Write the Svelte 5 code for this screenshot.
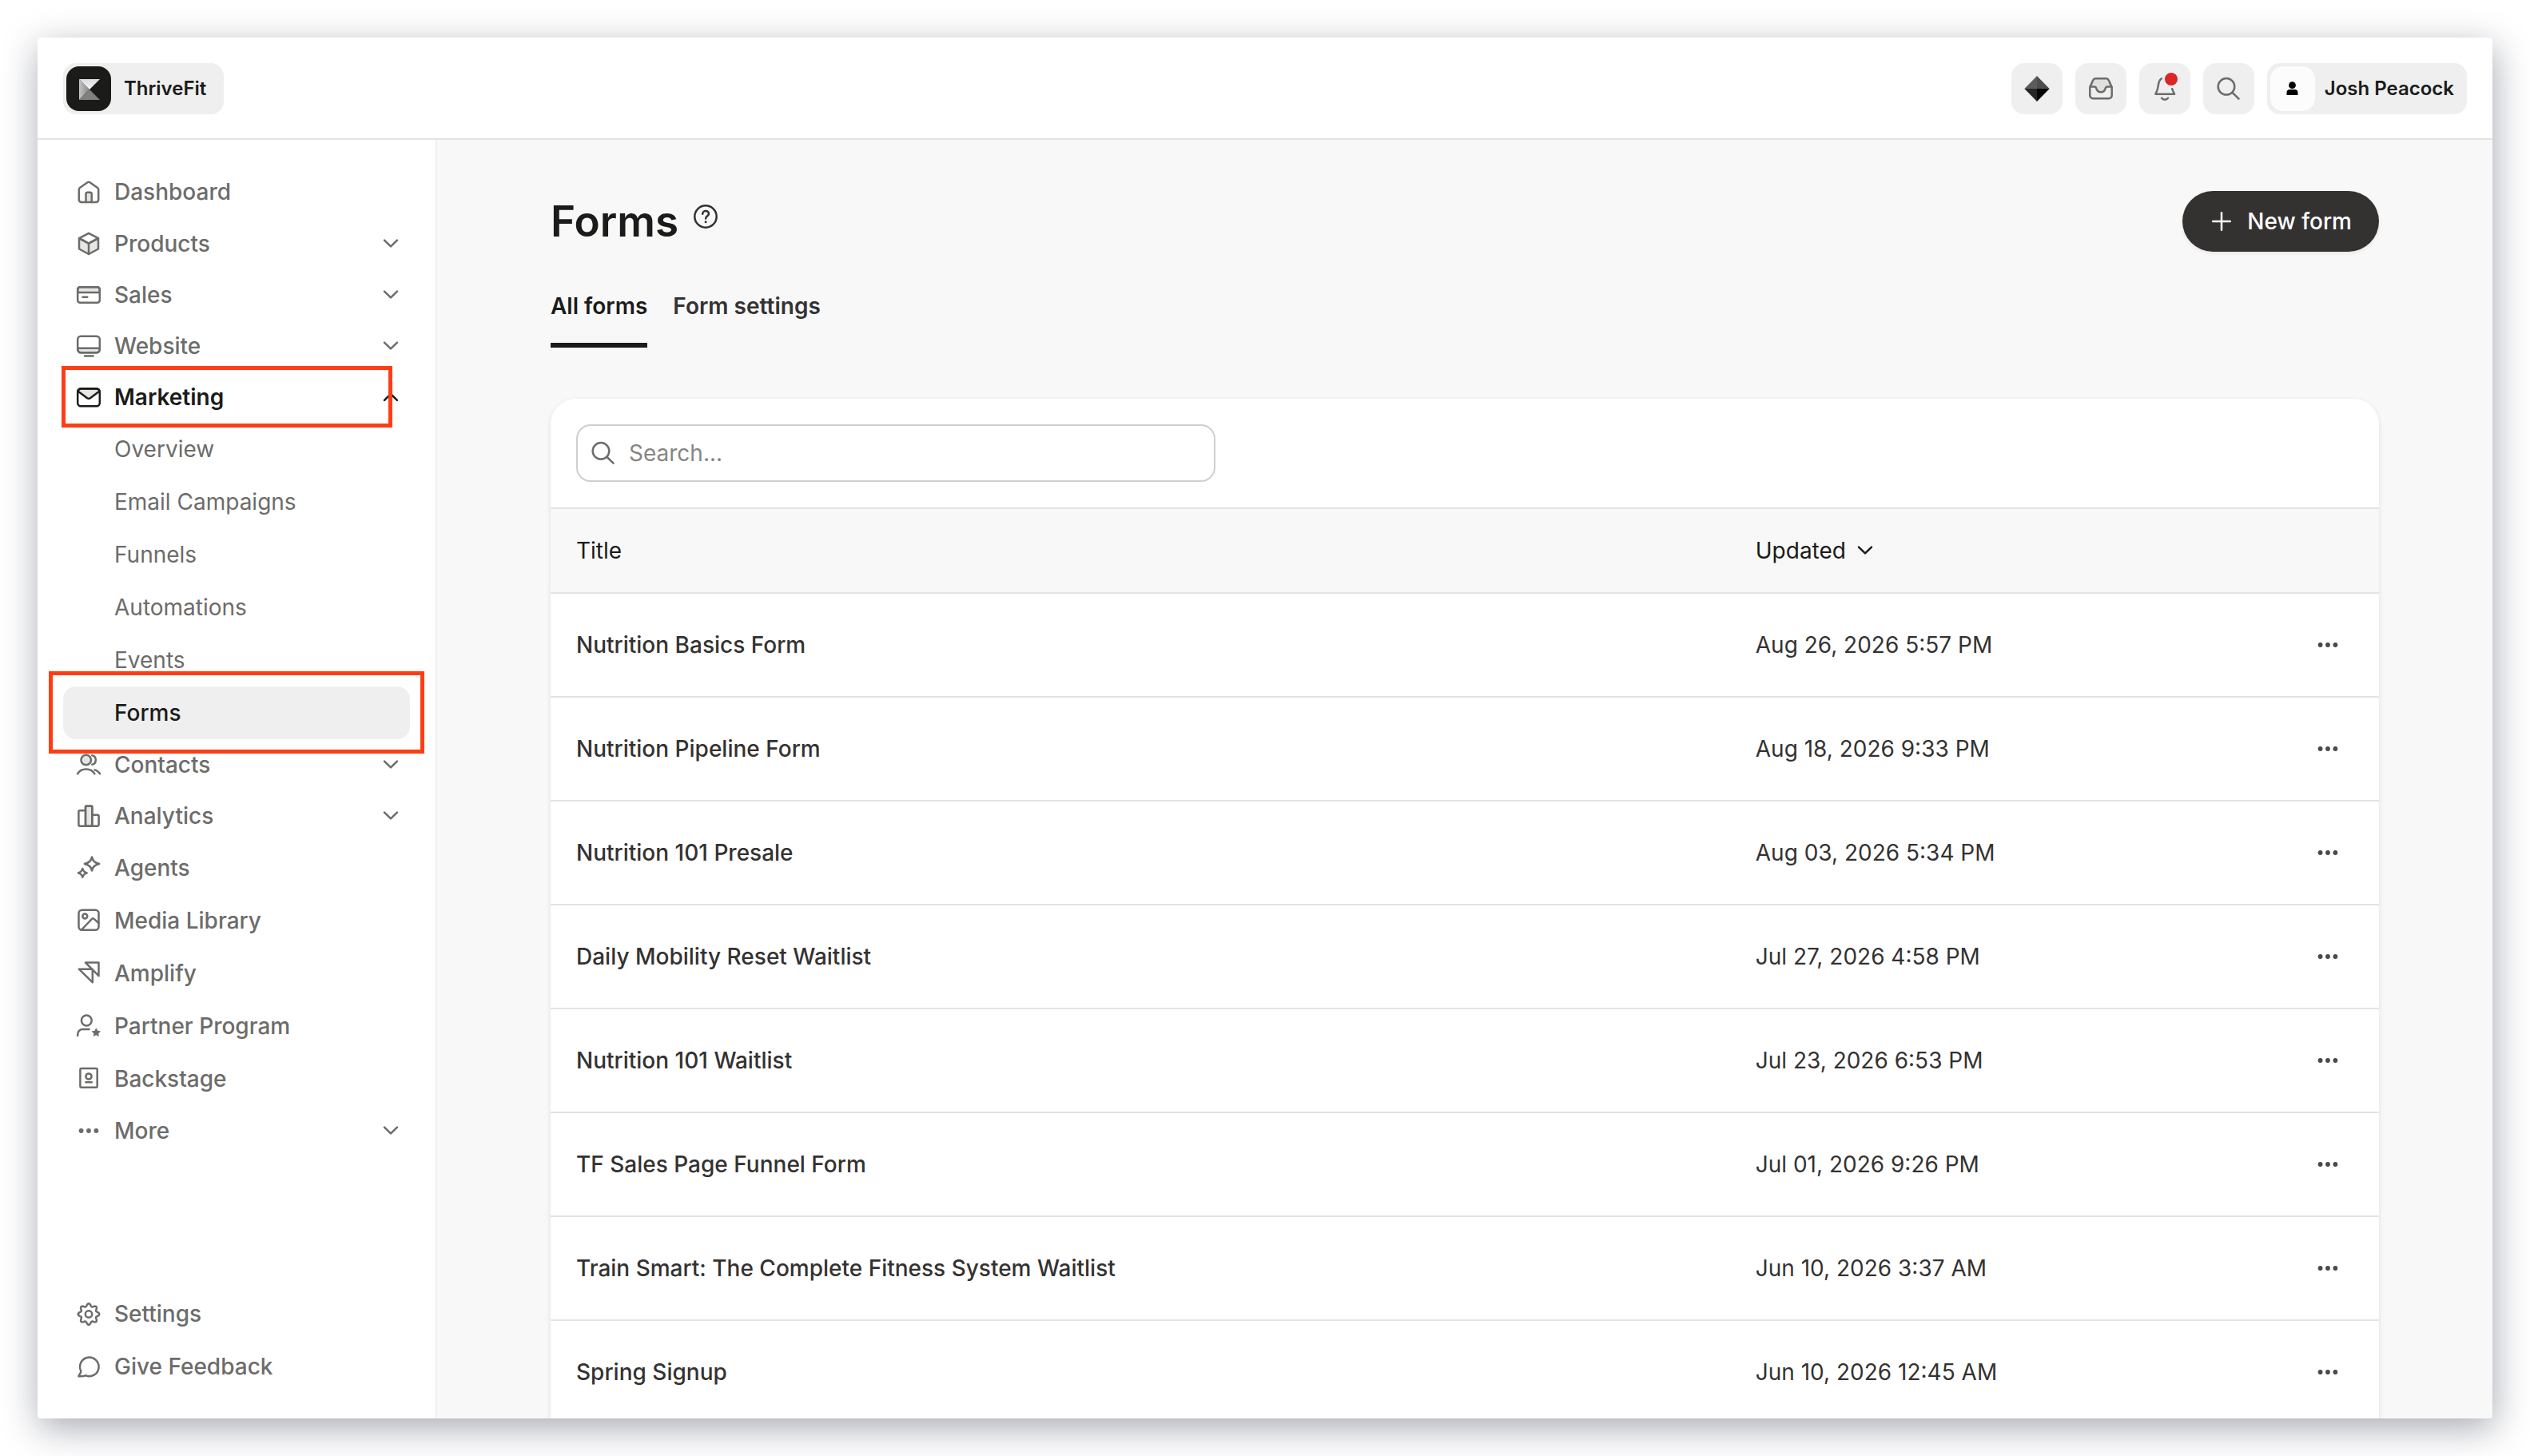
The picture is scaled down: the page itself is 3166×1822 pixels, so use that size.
<script lang="ts">
	type NavItem = {
		label: string;
		icon: string;
		expandable?: boolean;
		children?: string[];
	};

	type FormRow = {
		id: number;
		title: string;
		updated: string;
	};

	const nav: NavItem[] = [
		{ label: 'Dashboard', icon: 'home' },
		{ label: 'Products', icon: 'box', expandable: true },
		{ label: 'Sales', icon: 'card', expandable: true },
		{ label: 'Website', icon: 'monitor', expandable: true },
		{
			label: 'Marketing',
			icon: 'mail',
			expandable: true,
			children: ['Overview', 'Email Campaigns', 'Funnels', 'Automations', 'Events', 'Forms']
		},
		{ label: 'Contacts', icon: 'users', expandable: true },
		{ label: 'Analytics', icon: 'bars', expandable: true },
		{ label: 'Agents', icon: 'sparkle' },
		{ label: 'Media Library', icon: 'image' },
		{ label: 'Amplify', icon: 'amplify' },
		{ label: 'Partner Program', icon: 'partner' },
		{ label: 'Backstage', icon: 'badge' },
		{ label: 'More', icon: 'dots', expandable: true }
	];

	const footerNav: NavItem[] = [
		{ label: 'Settings', icon: 'gear' },
		{ label: 'Give Feedback', icon: 'chat' }
	];

	const forms: FormRow[] = [
		{ id: 1, title: 'Nutrition Basics Form', updated: 'Aug 26, 2026 5:57 PM' },
		{ id: 2, title: 'Nutrition Pipeline Form', updated: 'Aug 18, 2026 9:33 PM' },
		{ id: 3, title: 'Nutrition 101 Presale', updated: 'Aug 03, 2026 5:34 PM' },
		{ id: 4, title: 'Daily Mobility Reset Waitlist', updated: 'Jul 27, 2026 4:58 PM' },
		{ id: 5, title: 'Nutrition 101 Waitlist', updated: 'Jul 23, 2026 6:53 PM' },
		{ id: 6, title: 'TF Sales Page Funnel Form', updated: 'Jul 01, 2026 9:26 PM' },
		{ id: 7, title: 'Train Smart: The Complete Fitness System Waitlist', updated: 'Jun 10, 2026 3:37 AM' },
		{ id: 8, title: 'Spring Signup', updated: 'Jun 10, 2026 12:45 AM' }
	];

	let openSection = $state('Marketing');
	let currentPage = $state('Forms');
	let activeTab = $state('All forms');
	let search = $state('');

	const visibleForms = $derived(
		forms.filter((f) => f.title.toLowerCase().includes(search.toLowerCase()))
	);

	function toggle(label: string) {
		openSection = openSection === label ? '' : label;
	}

	// Eight-lobed gear outline
	const gearPath =
		Array.from({ length: 96 }, (_, i) => {
			const a = (i / 96) * Math.PI * 2;
			const r = 11.6 + 1.7 * Math.cos(8 * a);
			const x = 16 + r * Math.cos(a);
			const y = 16.5 + r * Math.sin(a);
			return `${i ? 'L' : 'M'}${x.toFixed(2)} ${y.toFixed(2)}`;
		}).join('') + 'Z';
</script>

<svelte:head>
	<title>Forms</title>
</svelte:head>

{#snippet icon(name: string)}
	<svg class="icon" viewBox="0 0 32 32" aria-hidden="true">
		{#if name === 'home'}
			<path d="M12.5 29V18.5a1.8 1.8 0 0 1 1.8-1.8h3.6a1.8 1.8 0 0 1 1.8 1.8V29" class="tint" />
			<path d="M3.8 13.2c0-.9.4-1.7 1.1-2.2l9.6-6.8c.9-.6 2.1-.6 3 0l9.6 6.8c.7.5 1.1 1.3 1.1 2.2V26a3 3 0 0 1-3 3H6.8a3 3 0 0 1-3-3Z" />
		{:else if name === 'box'}
			<path d="M4 9.2 16 15.6 28 9.2V22.5L16 29 4 22.5Z" class="tint" />
			<path d="M16 15.6V29M16 2.8 28 9.2 16 15.6 4 9.2Z" />
		{:else if name === 'card'}
			<path d="M2.2 13V9.3a3 3 0 0 1 3-3h21.6a3 3 0 0 1 3 3V13Z" class="tint" />
			<rect x="2.2" y="6.3" width="27.6" height="19.5" rx="3" />
			<path d="M8.5 18.7h5.8" />
		{:else if name === 'monitor'}
			<path d="M2.2 18.7h27.6v1.6a4 4 0 0 1-4 4H6.2a4 4 0 0 1-4-4Z" class="tint" />
			<rect x="2.2" y="3.7" width="27.6" height="20.6" rx="4" />
			<path d="M11 28.4h10.5" />
		{:else if name === 'mail'}
			<path d="M2.5 8.5c.5-2 2-3 4-3h19c2 0 3.5 1 4 3L17.8 17.2c-1.2.8-2.4.8-3.6 0Z" class="tint" />
			<rect x="2.2" y="5.3" width="27.6" height="22" rx="4" />
		{:else if name === 'users'}
			<circle cx="12.7" cy="10" r="6.3" class="tint" />
			<path d="M2 27.3c2.3-3.6 6.2-5.7 10.7-5.7s8.4 2.1 10.7 5.7M20.3 4.2c2.7.6 4.5 3 4.5 5.8s-1.8 5.2-4.5 5.8M23.5 22.4c2.7.7 5 2.5 6.6 4.9" />
		{:else if name === 'bars'}
			<rect x="12" y="3.7" width="8.3" height="25" class="tint" />
			<path d="M12 28.7H5a1.6 1.6 0 0 1-1.6-1.6V10.8A1.6 1.6 0 0 1 5 9.2h7M12 28.7V5.3a1.6 1.6 0 0 1 1.6-1.6h5.1a1.6 1.6 0 0 1 1.6 1.6v23.4M20.3 14.8H27a1.6 1.6 0 0 1 1.6 1.6v10.7a1.6 1.6 0 0 1-1.6 1.6H12" />
		{:else if name === 'sparkle'}
			<path d="M20 2.5c1.2 4.8 3.2 7 9.2 8.5-6 1.5-8 3.7-9.2 8.5-1.2-4.8-3.2-7-9.2-8.5 6-1.5 8-3.7 9.2-8.5Z" />
			<path d="M8.3 17c.8 3 2.1 4.5 5.4 5.4-3.3.9-4.6 2.4-5.4 5.4-.8-3-2.1-4.5-5.4-5.4 3.3-.9 4.6-2.4 5.4-5.4Z" />
		{:else if name === 'image'}
			<rect x="3.5" y="2.8" width="25" height="25" rx="4" />
			<circle cx="11.3" cy="10.5" r="3" />
			<path d="m7.5 27 12.6-13.2a1.8 1.8 0 0 1 2.5 0l5.7 5.2" />
		{:else if name === 'amplify'}
			<path d="M3.8 10.7h17v16.6ZM12 2.6h16.5v16.6Z" />
		{:else if name === 'partner'}
			<circle cx="13.3" cy="9" r="6.4" />
			<path d="M2.2 28v-1.5c0-3.6 2.7-6.4 6.3-6.4h8" />
			<path class="solid" d="m25.3 18.3 1.8 3.5 4 .6-2.9 2.8.7 3.9-3.6-1.8-3.6 1.8.7-3.9-2.9-2.8 4-.6Z" />
		{:else if name === 'badge'}
			<rect x="5.4" y="2.9" width="21.3" height="23.8" rx="1.5" />
			<circle cx="16" cy="13" r="3.6" />
			<path d="M12.5 20.3h7.2" />
		{:else if name === 'dots'}
			<g class="solid">
				<circle cx="6.6" cy="16" r="2.9" />
				<circle cx="16" cy="16" r="2.9" />
				<circle cx="25.4" cy="16" r="2.9" />
			</g>
		{:else if name === 'gear'}
			<path d={gearPath} />
			<circle cx="16" cy="16.5" r="4.2" />
		{:else if name === 'chat'}
			<path d="M6.300 21.800A11.800 11.800 0 1 1 12 27.200c-2 1.200-5 1-8.600 1 .9-2.200 2.700-3.600 2.900-6.400Z" />
		{:else if name === 'inbox'}
			<path d="M2.500 13.500 6.300 5.200a3.200 3.200 0 0 1 3-2h13.400a3.200 3.200 0 0 1 3 2l3.800 8.300H24.500c-1.500 0-2.400.5-2.800 2a5.800 5.800 0 0 1-11.400 0c-.4-1.500-1.300-2-2.800-2Z" class="tint" />
			<path d="M2.3 14v10.6A3.7 3.7 0 0 0 6 28.300h20a3.700 3.700 0 0 0 3.700-3.700V14" />
		{:else if name === 'bell'}
			<path d="M12 3.300C8.800 5.300 8.200 8 7.800 12c-.3 4-1.300 6.500-3.400 10.700h23.700c-1.200-2.200-2.300-4.500-2.900-6.700M12 27.800c2 2.500 6 2.500 8 0" />
		{:else if name === 'search'}
			<circle cx="13" cy="13.300" r="10.300" />
			<path d="m20.700 21 7.800 7.600" />
		{:else if name === 'help'}
			<circle cx="16" cy="16" r="13.700" />
			<path d="M12.200 12.800c0-2.200 1.700-3.700 3.900-3.700s3.900 1.400 3.900 3.400c0 2.700-3.900 2.900-3.900 5.900" />
			<circle cx="16.100" cy="22.800" r="1.500" class="solid" />
		{:else if name === 'plus'}
			<path d="M16 5.200v21.600M5.200 16h21.600" />
		{:else if name === 'down'}
			<path d="m8 11.600 8 7.800 8-7.800" />
		{:else if name === 'up'}
			<path d="m8 19.800 8-7.800 8 7.800" />
		{/if}
	</svg>
{/snippet}

<div class="page">
	<div class="window">
		<header class="topbar">
			<button class="site">
				<svg class="logo" viewBox="0 0 56 56" aria-hidden="true">
					<defs>
						<linearGradient id="k-top" x1="0" y1="0" x2="0" y2="1">
							<stop offset="0" stop-color="#dcd9dc" />
							<stop offset="1" stop-color="#f4f4f4" />
						</linearGradient>
						<linearGradient id="k-left" x1="0" y1="0" x2="1" y2="0">
							<stop offset="0" stop-color="#c4c4c4" />
							<stop offset="1" stop-color="#858585" />
						</linearGradient>
					</defs>
					<rect width="56" height="56" rx="16" fill="#1b1b19" />
					<path d="M16 16 29 29 16 42Z" fill="url(#k-left)" />
					<path d="M16 16H42L29 29Z" fill="url(#k-top)" />
					<path d="M16 42H42L29 29Z" fill="#80807e" />
				</svg>
				ThriveFit
			</button>

			<div class="tools">
				<button class="tool" aria-label="Assistant">
					<svg class="icon" viewBox="0 0 32 32" aria-hidden="true">
						<path d="M16 0 .3 16H16Z" class="facet-a" />
						<path d="M16 0 31.7 16H16Z" class="facet-b" />
						<path d="M16 32 .3 16H16Z" class="facet-c" />
						<path d="M16 32 31.7 16H16Z" class="facet-d" />
					</svg>
				</button>
				<button class="tool" aria-label="Inbox">{@render icon('inbox')}</button>
				<button class="tool" aria-label="Notifications">
					{@render icon('bell')}
					<span class="unread"></span>
				</button>
				<button class="tool" aria-label="Search">{@render icon('search')}</button>
				<button class="user">
					<span class="avatar">
						<svg viewBox="0 0 24 24" width="24" height="24" aria-hidden="true">
							<circle cx="11.5" cy="7.7" r="4.4" />
							<path d="M4.5 20v-3a4 4 0 0 1 4-4h6a4 4 0 0 1 4 4v3Z" />
						</svg>
					</span>
					Josh Peacock
				</button>
			</div>
		</header>

		<div class="body">
			<nav class="sidebar">
				<ul>
					{#each nav as item (item.label)}
						{@const open = openSection === item.label}
						<li>
							{#if item.expandable}
								<button
									class="nav-item toggle"
									class:open
									aria-expanded={open}
									onclick={() => toggle(item.label)}
								>
									{@render icon(item.icon)}
									<span class="label">{item.label}</span>
									{@render icon(open ? 'up' : 'down')}
									{#if item.label === 'Marketing'}
										<span class="callout section"></span>
									{/if}
								</button>
							{:else}
								<a class="nav-item" href="#{item.icon}">
									{@render icon(item.icon)}
									<span class="label">{item.label}</span>
								</a>
							{/if}
							{#if item.children && open}
								<ul>
									{#each item.children as child (child)}
										<li>
											<a
												class="nav-item child"
												class:current={child === currentPage}
												href="#{child}"
												onclick={() => (currentPage = child)}
											>
												{child}
												{#if child === 'Forms'}
													<span class="callout page-link"></span>
												{/if}
											</a>
										</li>
									{/each}
								</ul>
							{/if}
						</li>
					{/each}
				</ul>
				<ul>
					{#each footerNav as item (item.label)}
						<li>
							<a class="nav-item" href="#{item.icon}">
								{@render icon(item.icon)}
								<span class="label">{item.label}</span>
							</a>
						</li>
					{/each}
				</ul>
			</nav>

			<main>
				<div class="content">
					<div class="title-row">
						<h1>Forms</h1>
						<button class="help" aria-label="Help">{@render icon('help')}</button>
						<button class="new-form">{@render icon('plus')}New form</button>
					</div>

					<div class="tabs" role="tablist">
						{#each ['All forms', 'Form settings'] as tab (tab)}
							<button
								role="tab"
								class:active={activeTab === tab}
								aria-selected={activeTab === tab}
								onclick={() => (activeTab = tab)}
							>
								{tab}
							</button>
						{/each}
					</div>

					<section class="card">
						<div class="toolbar">
							<label class="search">
								{@render icon('search')}
								<input type="text" bind:value={search} placeholder="Search..." aria-label="Search forms" />
							</label>
						</div>
						<table>
							<thead>
								<tr>
									<th class="col-title">Title</th>
									<th>
										<button class="sort">Updated {@render icon('down')}</button>
									</th>
									<th class="col-actions"></th>
								</tr>
							</thead>
							<tbody>
								{#each visibleForms as form (form.id)}
									<tr>
										<td><a href="#form-{form.id}">{form.title}</a></td>
										<td>{form.updated}</td>
										<td class="col-actions">
											<button class="row-menu" aria-label="Actions for {form.title}">
												{@render icon('dots')}
											</button>
										</td>
									</tr>
								{/each}
							</tbody>
						</table>
					</section>
				</div>
			</main>
		</div>
	</div>
</div>

<style>
	:global(body) {
		margin: 0;
		background: white;
		color: #1b1b19;
		font-family: Inter, 'Liberation Sans', sans-serif;
		font-size: 28px;
		line-height: 40px;
	}

	button,
	input {
		font: inherit;
		color: inherit;
		border: none;
		background: none;
		padding: 0;
		margin: 0;
	}

	button {
		cursor: pointer;
	}

	a {
		color: inherit;
		text-decoration: none;
	}

	ul {
		list-style: none;
		margin: 0;
		padding: 0;
	}

	.icon {
		display: block;
		width: 32px;
		height: 32px;
		flex-shrink: 0;
		fill: none;
		stroke: currentColor;
		stroke-width: 2.5;
		stroke-linecap: round;
		stroke-linejoin: round;
	}

	.icon .tint {
		fill: #e6e6e5;
	}

	.icon .solid {
		fill: currentColor;
		stroke: none;
	}

	.page {
		box-sizing: border-box;
		height: 100vh;
		padding: 47px;
	}

	.window {
		display: flex;
		flex-direction: column;
		height: 100%;
		border-radius: 4px;
		overflow: hidden;
		background: white;
		box-shadow: 2px 12px 46px rgba(10, 20, 45, 0.36);
	}

	.topbar {
		display: flex;
		align-items: center;
		justify-content: space-between;
		padding: 32px 32px 30px;
		border-bottom: 2px solid #e3e3e2;
		font-size: 24px;
		font-weight: 600;
		line-height: 32px;
	}

	.site,
	.user {
		display: flex;
		align-items: center;
		height: 64px;
		border-radius: 16px;
		background: #efefef;
	}

	.site {
		gap: 16px;
		padding: 0 22px 0 4px;
	}

	.logo {
		width: 56px;
		height: 56px;
	}

	.tools {
		display: flex;
		gap: 16px;
	}

	.tool {
		position: relative;
		display: grid;
		place-items: center;
		width: 64px;
		height: 64px;
		border-radius: 16px;
		background: #efefef;
		color: #6c6c6a;
	}

	.tool .tint {
		fill: #e0e0df;
	}

	.facet-a,
	.facet-b,
	.facet-c,
	.facet-d {
		stroke: none;
	}

	.facet-a {
		fill: #5c5c5c;
	}

	.facet-b {
		fill: #4e4e4e;
	}

	.facet-c {
		fill: #262626;
	}

	.facet-d {
		fill: #060606;
	}

	.unread {
		position: absolute;
		top: 9px;
		right: 13px;
		width: 16px;
		height: 16px;
		border: 3px solid #efefef;
		border-radius: 50%;
		background: #dc2626;
	}

	.user {
		gap: 12px;
		padding: 0 16px 0 4px;
	}

	.avatar {
		display: grid;
		place-items: center;
		width: 56px;
		height: 56px;
		border-radius: 16px;
		background: #fcfcfc;
	}

	.body {
		display: flex;
		flex: 1;
		min-height: 0;
	}

	.sidebar {
		box-sizing: border-box;
		display: flex;
		flex-direction: column;
		justify-content: space-between;
		width: 500px;
		flex-shrink: 0;
		padding: 32px;
		border-right: 2px solid #efefef;
		color: #6c6c6a;
		font-weight: 500;
	}

	.nav-item {
		position: relative;
		box-sizing: border-box;
		display: flex;
		align-items: center;
		gap: 16px;
		width: 100%;
		height: 66px;
		padding: 0 16px;
		border-radius: 16px;
		text-align: left;
	}

	.nav-item.toggle {
		height: 64px;
		padding-right: 8px;
	}

	.nav-item.open {
		color: #1b1b19;
		font-weight: 600;
	}

	.nav-item.child {
		padding-left: 64px;
		font-weight: 400;
	}

	.nav-item.current {
		background: #efefef;
		color: #1b1b19;
		font-weight: 500;
	}

	.label {
		flex: 1;
	}

	.callout {
		position: absolute;
		z-index: 1;
		border: 5px solid #ff3d14;
		pointer-events: none;
	}

	.callout.section {
		inset: -7px 22px -6px -2px;
	}

	.callout.page-link {
		inset: -19px -18px -18px;
	}

	main {
		flex: 1;
		min-width: 0;
		overflow: hidden;
		padding: 64px 32px 0;
		background: #f8f8f8;
	}

	.content {
		max-width: 2288px;
		margin: 0 auto;
	}

	.title-row {
		display: flex;
		align-items: center;
		gap: 18px;
	}

	h1 {
		margin: 0;
		font-size: 53px;
		font-weight: 600;
		line-height: 64px;
	}

	.help {
		padding-bottom: 12px;
		color: #343231;
	}

	.new-form {
		display: flex;
		align-items: center;
		gap: 16px;
		height: 76px;
		margin-left: auto;
		padding: 0 34px 0 33px;
		border-radius: 38px;
		background: #343231;
		color: white;
		font-weight: 500;
		box-shadow: 0 2px 4px rgba(0, 0, 0, 0.08);
	}

	.tabs {
		display: flex;
		gap: 32px;
		margin: 32px 0 64px;
	}

	.tabs button {
		padding: 16px 0 26px;
		border-bottom: 6px solid transparent;
		color: #343231;
		font-weight: 600;
	}

	.tabs button.active {
		border-color: #1b1b19;
		color: #1b1b19;
	}

	.card {
		border-radius: 32px 32px 0 0;
		background: white;
		box-shadow: 0 2px 6px rgba(0, 0, 0, 0.1);
	}

	.toolbar {
		padding: 32px;
		border-bottom: 2px solid #e3e3e2;
	}

	.search {
		box-sizing: border-box;
		display: flex;
		align-items: center;
		gap: 16px;
		width: 800px;
		max-width: 100%;
		height: 72px;
		padding: 0 16px;
		border: 2px solid #cfcfce;
		border-radius: 18px;
		color: #6c6c6a;
	}

	.search input {
		flex: 1;
		min-width: 0;
		color: #1b1b19;
		outline: none;
	}

	.search input::placeholder {
		color: #868684;
		opacity: 1;
	}

	table {
		width: 100%;
		table-layout: fixed;
		border-collapse: separate;
		border-spacing: 0;
	}

	th,
	td {
		box-sizing: border-box;
		padding: 0 32px;
		border-bottom: 2px solid #e3e3e2;
		text-align: left;
	}

	th {
		height: 106px;
		background: #f8f8f8;
		font-weight: 400;
	}

	td {
		height: 130px;
		color: #343231;
	}

	td a {
		font-weight: 500;
	}

	.col-title {
		width: 64.5%;
	}

	.col-actions {
		width: 128px;
	}

	.sort {
		display: flex;
		align-items: center;
		gap: 8px;
	}

	.row-menu {
		display: grid;
		place-items: center;
		width: 64px;
		height: 64px;
		color: #4a4a49;
	}
</style>
